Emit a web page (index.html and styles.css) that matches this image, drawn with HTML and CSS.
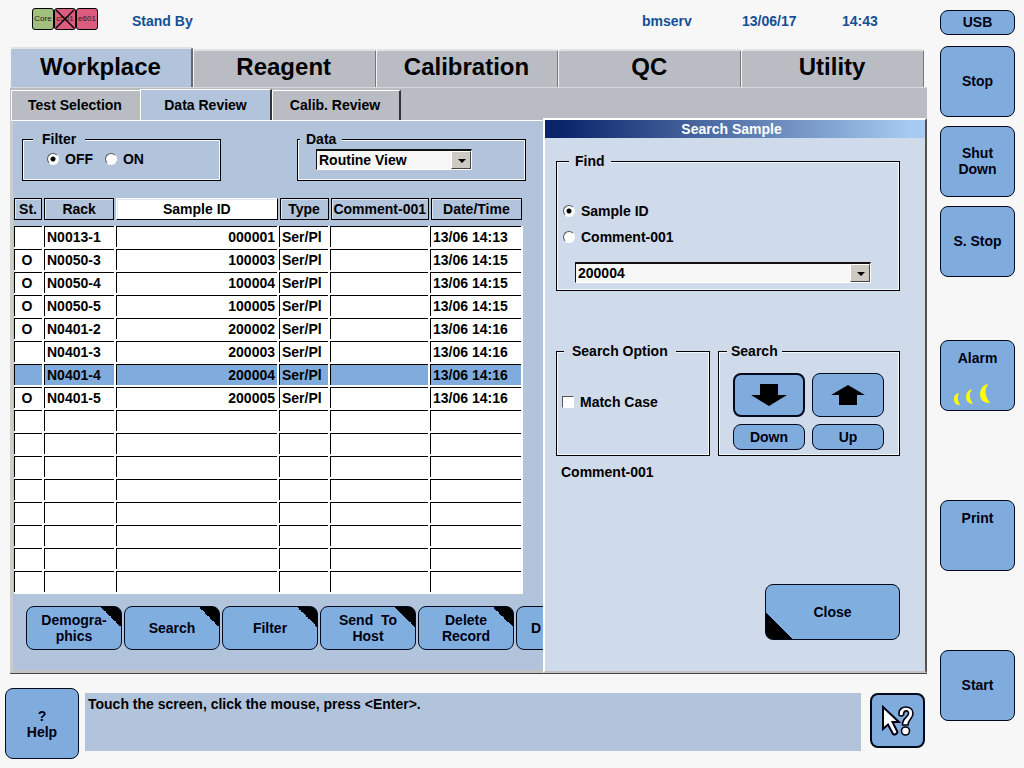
FILE: index.html
```html
<!DOCTYPE html>
<html lang="en">
<head>
<meta charset="utf-8">
<title>Data Review</title>
<link rel="stylesheet" href="styles.css">
</head>
<body>
<div class="app">
  <main class="main">
    <header class="status-bar">
      <div class="modules">
        <span class="module ok">Core</span>
        <span class="module fault">c501
          <svg class="cross" viewBox="0 0 22 22" aria-hidden="true"><path d="M2 2 20 20M20 2 2 20" stroke="#000" stroke-width="1.4"/></svg>
        </span>
        <span class="module fault">e601</span>
      </div>
      <span class="state">Stand By</span>
      <span class="info">bmserv</span>
      <span class="info">13/06/17</span>
      <span class="info last">14:43</span>
    </header>

    <nav class="tabs">
      <button class="tab active">Workplace</button>
      <button class="tab">Reagent</button>
      <button class="tab">Calibration</button>
      <button class="tab">QC</button>
      <button class="tab">Utility</button>
    </nav>

    <div class="workspace">
      <div class="left">
        <nav class="subtabs">
          <button class="subtab">Test Selection</button>
          <button class="subtab active">Data Review</button>
          <button class="subtab">Calib. Review</button>
        </nav>
        <section class="panel">
          <div class="filters">
            <fieldset class="group filter">
              <legend>Filter</legend>
              <label class="option"><input type="radio" name="filter" checked>OFF</label>
              <label class="option"><input type="radio" name="filter">ON</label>
            </fieldset>
            <fieldset class="group data">
              <legend>Data</legend>
              <span class="combo"><select aria-label="Data"><option>Routine View</option></select></span>
            </fieldset>
          </div>

          <table class="samples">
            <thead>
              <tr><th>St.</th><th>Rack</th><th class="sorted">Sample ID</th><th>Type</th><th>Comment-001</th><th>Date/Time</th></tr>
            </thead>
            <tbody>
              <tr><td></td><td>N0013-1</td><td>000001</td><td>Ser/Pl</td><td></td><td>13/06 14:13</td></tr>
              <tr><td>O</td><td>N0050-3</td><td>100003</td><td>Ser/Pl</td><td></td><td>13/06 14:15</td></tr>
              <tr><td>O</td><td>N0050-4</td><td>100004</td><td>Ser/Pl</td><td></td><td>13/06 14:15</td></tr>
              <tr><td>O</td><td>N0050-5</td><td>100005</td><td>Ser/Pl</td><td></td><td>13/06 14:15</td></tr>
              <tr><td>O</td><td>N0401-2</td><td>200002</td><td>Ser/Pl</td><td></td><td>13/06 14:16</td></tr>
              <tr><td></td><td>N0401-3</td><td>200003</td><td>Ser/Pl</td><td></td><td>13/06 14:16</td></tr>
              <tr class="selected"><td></td><td>N0401-4</td><td>200004</td><td>Ser/Pl</td><td></td><td>13/06 14:16</td></tr>
              <tr><td>O</td><td>N0401-5</td><td>200005</td><td>Ser/Pl</td><td></td><td>13/06 14:16</td></tr>
              <tr><td></td><td></td><td></td><td></td><td></td><td></td></tr>
              <tr><td></td><td></td><td></td><td></td><td></td><td></td></tr>
              <tr><td></td><td></td><td></td><td></td><td></td><td></td></tr>
              <tr><td></td><td></td><td></td><td></td><td></td><td></td></tr>
              <tr><td></td><td></td><td></td><td></td><td></td><td></td></tr>
              <tr><td></td><td></td><td></td><td></td><td></td><td></td></tr>
              <tr><td></td><td></td><td></td><td></td><td></td><td></td></tr>
              <tr><td></td><td></td><td></td><td></td><td></td><td></td></tr>
            </tbody>
          </table>

          <div class="actions">
            <button class="btn action">Demogra-<br>phics</button>
            <button class="btn action">Search</button>
            <button class="btn action">Filter</button>
            <button class="btn action">Send&nbsp; To<br>Host</button>
            <button class="btn action">Delete<br>Record</button>
            <button class="btn action cut">D</button>
          </div>
        </section>
      </div>

      <section class="dialog">
        <h2 class="title">Search Sample</h2>
        <div class="dialog-body">
          <fieldset class="group find">
            <legend>Find</legend>
            <label class="option"><input type="radio" name="find" checked>Sample ID</label>
            <label class="option"><input type="radio" name="find">Comment-001</label>
            <span class="combo"><select aria-label="Find"><option>200004</option></select></span>
          </fieldset>
          <div class="search-row">
            <fieldset class="group choice">
              <legend>Search Option</legend>
              <label class="option"><input type="checkbox">Match Case</label>
            </fieldset>
            <fieldset class="group direction">
              <legend>Search</legend>
              <div class="pad">
                <button class="btn arrow focused" aria-label="Down"><svg width="36" height="22" viewBox="0 0 36 22"><path d="M9 0h18v11h9L18 22 0 11h9z"/></svg></button>
                <button class="btn arrow" aria-label="Up"><svg width="34" height="20" viewBox="0 0 34 20"><path d="M17 0 34 10H26V20H8V10H0z"/></svg></button>
                <button class="btn small">Down</button>
                <button class="btn small">Up</button>
              </div>
            </fieldset>
          </div>
          <p class="note">Comment-001</p>
          <button class="btn close">Close</button>
        </div>
      </section>
    </div>

    <footer class="footer">
      <button class="btn help">?<br>Help</button>
      <p class="message">Touch the screen, click the mouse, press &lt;Enter&gt;.</p>
      <button class="btn whats-this" aria-label="Help pointer">
        <svg width="34" height="32" viewBox="0 0 34 32">
          <path d="M2 2V24L7 19.500 12 29Q15 30.500 16.500 27L11.500 17H18Z" fill="#fff" stroke="#001" stroke-width="2"/>
          <path d="M18 10V8C18 0 32 0 32 8.500C32 14 27 14 27 20H21.500C21 13 27.500 12 27.500 8.500C27.500 4.500 22.500 5 22.500 10Q20 12 18 10Z" fill="#fff" stroke="#001" stroke-width="1.600"/>
          <circle cx="24.500" cy="26" r="4" fill="#fff" stroke="#001" stroke-width="1.600"/>
        </svg>
      </button>
    </footer>
  </main>

  <aside class="sidebar">
    <button class="btn side usb">USB</button>
    <button class="btn side stop">Stop</button>
    <button class="btn side">Shut<br>Down</button>
    <button class="btn side">S. Stop</button>
    <button class="btn side alarm">Alarm
      <svg width="38" height="22" viewBox="0 0 38 22" fill="#ff0" aria-hidden="true">
        <path d="M6 9Q3 14 7 21Q1 21 1 15Q1 10 6 9Z"/>
        <path d="M19 5Q14 12 20 20Q13 19 13 13Q13 7 19 5Z"/>
        <path d="M35 0Q29 9 37 19Q27 19 27 10Q28 1 35 0Z"/>
      </svg>
    </button>
    <button class="btn side print">Print</button>
    <button class="btn side start">Start</button>
  </aside>
</div>
</body>
</html>
```

FILE: styles.css
```css
* {
  box-sizing: border-box;
}

body {
  margin: 0;
  background: #f7f7f7;
  color: #000;
  font: bold 14px/16px "Liberation Sans", Arial, sans-serif;
}

button,
select {
  font: inherit;
  color: inherit;
}

p,
h2 {
  margin: 0;
}

.app {
  display: grid;
  grid-template-columns: minmax(0, 1fr) 97px;
}

/* status line */
.status-bar {
  display: flex;
  align-items: center;
  height: 47px;
  padding: 0 0 5px 32px;
  color: #134f95;
}

.modules {
  display: flex;
  width: 100px;
  padding-bottom: 4px;
}

.module {
  position: relative;
  width: 22px;
  height: 22px;
  border: 1px solid #000;
  border-radius: 3px;
  color: #222;
  font-size: 8px;
  font-weight: normal;
  line-height: 20px;
  text-align: center;
}

.ok {
  background: #a1c07e;
}

.fault {
  background: #dc5c80;
}

.cross {
  position: absolute;
  inset: -1px;
}

.state {
  flex: 1;
}

.info {
  width: 100px;
}

.info.last {
  width: 85px;
}

/* main tabs */
.tabs {
  display: grid;
  grid-template-columns: repeat(5, 1fr);
  align-items: end;
  margin: 0 3px 0 10px;
}

.tab {
  height: 38px;
  padding: 0 1px 4px 0;
  border: 0;
  border-top: 2px solid #e2e2e4;
  border-left: 1px solid #f4f4f4;
  border-right: 1px solid #77777c;
  border-radius: 3px 3px 0 0;
  background: #babcc4;
  font-size: 24px;
}

.tab.active {
  height: 40px;
  padding-bottom: 2px;
  border-right: 2px solid #66686e;
  background: #b2c4dc;
}

/* work area */
.workspace {
  display: grid;
  grid-template-columns: 533fr 384fr;
  margin-left: 10px;
  border-top: 1px solid #d8d8dc;
  border-bottom: 1px solid #444;
  background: #babcc4;
}

.left {
  display: flex;
  flex-direction: column;
  min-width: 0;
}

.subtabs {
  display: grid;
  grid-template-columns: 129px 132px 129px;
  align-items: end;
  height: 32px;
  padding-left: 1px;
}

.subtab {
  height: 30px;
  padding: 0 2px 1px 0;
  border: 0;
  border-top: 1px solid #fffef4;
  border-left: 1px solid #fffef4;
  background: #babcc4;
}

.subtab.active {
  height: 31px;
  padding: 0;
  border-right: 2px solid #333;
  background: #b2c4dc;
}

.subtab:last-child {
  border-right: 2px solid #333;
}

.panel {
  flex: 1;
  padding: 10px 0 20px 1px;
  border-top: 1px solid #fff;
  border-left: 3px solid #ccc;
  border-bottom: 3px solid #c4c2c0;
  background: #b2c4dc;
}

.filters {
  display: grid;
  grid-template-columns: 199fr 229fr;
  gap: 76px;
  margin: 0 17px 17px 8px;
}

.group {
  min-width: 0;
  margin: 0;
  padding: 0;
  border: 1px solid #000;
  box-shadow: inset 0 0 0 1px #f4f7fb;
}

.group legend {
  background: #b2c4dc;
}

.filter {
  height: 50px;
  padding-left: 24px;
}

.filter legend {
  margin-left: -14px;
  padding: 0 9px;
}

.data {
  padding: 2px 0 0 18px;
}

.data legend {
  margin-left: -16px;
  padding: 0 6px;
}

.option {
  display: inline-flex;
  align-items: center;
  gap: 6px;
}

.filter .option {
  margin: 4px 8px 0 0;
}

input[type="radio"],
input[type="checkbox"] {
  flex: none;
  appearance: none;
  width: 12px;
  height: 12px;
  margin: 0;
  border: 1px solid;
  border-color: #555 #fff #fff #555;
  background: #fff;
}

input[type="radio"] {
  border-radius: 50%;
}

input[type="radio"]:checked {
  background: radial-gradient(circle, #000 0 2px, #fff 3px);
}

.combo {
  position: relative;
  display: block;
}

.combo select {
  display: block;
  appearance: none;
  width: 100%;
  height: 21px;
  padding: 0 20px 1px 2px;
  border: 1px solid;
  border-color: #111 #fff #fff #111;
  border-top-width: 2px;
  border-radius: 0;
  background: #f6f6f6;
}

.combo::after {
  content: "";
  position: absolute;
  top: 2px;
  right: 1px;
  bottom: 1px;
  width: 18px;
  border: 1px solid;
  border-color: #fff #444 #444 #fff;
  background: #cdcac4;
  pointer-events: none;
}

.combo::before {
  content: "";
  position: absolute;
  z-index: 1;
  top: 10px;
  right: 6px;
  border: 4px solid transparent;
  border-top-color: #000;
  border-bottom: 0;
  pointer-events: none;
}

.data .combo {
  width: 156px;
}

/* sample list */
.samples {
  display: block;
  margin-right: 20px;
}

.samples tr {
  display: grid;
  grid-template-columns: 28fr 70fr 161fr 49fr 98fr 91fr;
  column-gap: 2px;
}

.samples thead {
  display: block;
  margin-bottom: 6px;
  padding-right: 1px;
}

.samples tbody {
  display: grid;
  row-gap: 2px;
  padding: 0 2px 2px 0;
  background: #fff;
}

.samples th {
  min-width: 0;
  padding: 2px 0;
  border: 1px solid #000;
  box-shadow: inset 1px 1px #dfe8f2;
}

.samples th.sorted {
  border-top-color: #fff;
  border-left-color: #fff;
  background: #fff;
}

.samples td {
  min-width: 0;
  height: 21px;
  padding: 2px 2px 0;
  border-top: 1px solid #000;
  border-left: 1px solid #000;
  line-height: 16px;
  white-space: nowrap;
}

.samples td:first-child {
  padding-right: 5px;
  text-align: center;
}

.samples td:nth-child(3) {
  text-align: right;
}

.selected td {
  background: #80acdd;
}

/* buttons */
.btn {
  padding: 0;
  border: 1px solid #00081c;
  border-radius: 8px;
  background: #80acdd;
  color: #001;
}

.actions {
  display: flex;
  gap: 2px;
  margin-top: 12px;
  padding-left: 12px;
  overflow: hidden;
}

.action {
  flex: none;
  width: 96px;
  height: 44px;
  background: linear-gradient(45deg, transparent 50%, #000 50%) top right / 20px 20px no-repeat #80afdf;
}

.action.cut {
  padding-left: 14px;
  text-align: left;
}

/* search dialog */
.dialog {
  display: flex;
  flex-direction: column;
  min-width: 0;
  margin-top: 30px;
  border: 2px solid;
  border-color: #fff #55534f #c4c2c0 #fff;
  background: #cfdaea;
}

.title {
  padding: 1px 7px 1px 0;
  background: linear-gradient(90deg, #0a246a 4%, #a6caf0 96%);
  color: #fff;
  font: inherit;
  text-align: center;
}

.dialog-body {
  flex: 1;
  display: flex;
  flex-direction: column;
  padding: 15px 25px 31px 11px;
}

.dialog .group {
  height: 113px;
}

.dialog .group legend {
  background: #cfdaea;
}

.dialog .find {
  display: flex;
  flex-direction: column;
  height: 138px;
  padding: 34px 28px 0 6px;
}

.find .option {
  margin-bottom: 10px;
}

.dialog .find legend {
  margin-left: 6px;
  padding: 0 6px;
}

.find .combo {
  margin: 7px 0 0 12px;
}

.search-row {
  display: grid;
  grid-template-columns: 154fr 182fr;
  gap: 8px;
  margin-top: 52px;
}

.choice {
  padding: 35px 0 0 5px;
}

.dialog .choice legend {
  margin-left: 2px;
  padding: 0 8px;
}

.direction {
  padding: 14px 15px 0 14px;
}

.dialog .direction legend {
  margin-left: -6px;
  padding: 0 4px;
}

.pad {
  display: grid;
  grid-template-columns: 1fr 1fr;
  gap: 7px;
}

.arrow {
  display: grid;
  place-items: center;
  height: 44px;
}

.arrow.focused {
  border-width: 2px;
}

.small {
  height: 26px;
}

.note {
  margin: 8px 0 0 5px;
}

.close {
  align-self: flex-end;
  width: 135px;
  height: 56px;
  margin-top: auto;
  background: linear-gradient(45deg, #000 50%, transparent 50%) bottom left / 26px 26px no-repeat #80afdf;
}

/* message line */
.footer {
  display: flex;
  gap: 6px;
  padding: 14px 2px 9px 5px;
}

.help {
  width: 74px;
  height: 71px;
}

.message {
  flex: 1;
  height: 58px;
  margin-top: 5px;
  padding: 3px;
  background: #b2c4dc;
}

.whats-this {
  display: grid;
  place-items: center;
  width: 55px;
  height: 55px;
  margin: 5px 0 0 3px;
  border-width: 2px;
}

/* right-hand keys */
.sidebar {
  display: flex;
  flex-direction: column;
  gap: 9px;
  padding: 10px 9px 0 13px;
}

.side {
  height: 71px;
  padding-bottom: 2px;
}

.usb {
  height: 25px;
}

.stop {
  margin-top: 2px;
}

.alarm {
  display: flex;
  flex-direction: column;
  align-items: center;
  justify-content: space-between;
  margin-top: 54px;
  padding: 9px 0 4px;
}

.alarm svg {
  margin-right: 12px;
}

.print {
  margin-top: 80px;
  padding-bottom: 36px;
}

.start {
  margin-top: 70px;
}
```
